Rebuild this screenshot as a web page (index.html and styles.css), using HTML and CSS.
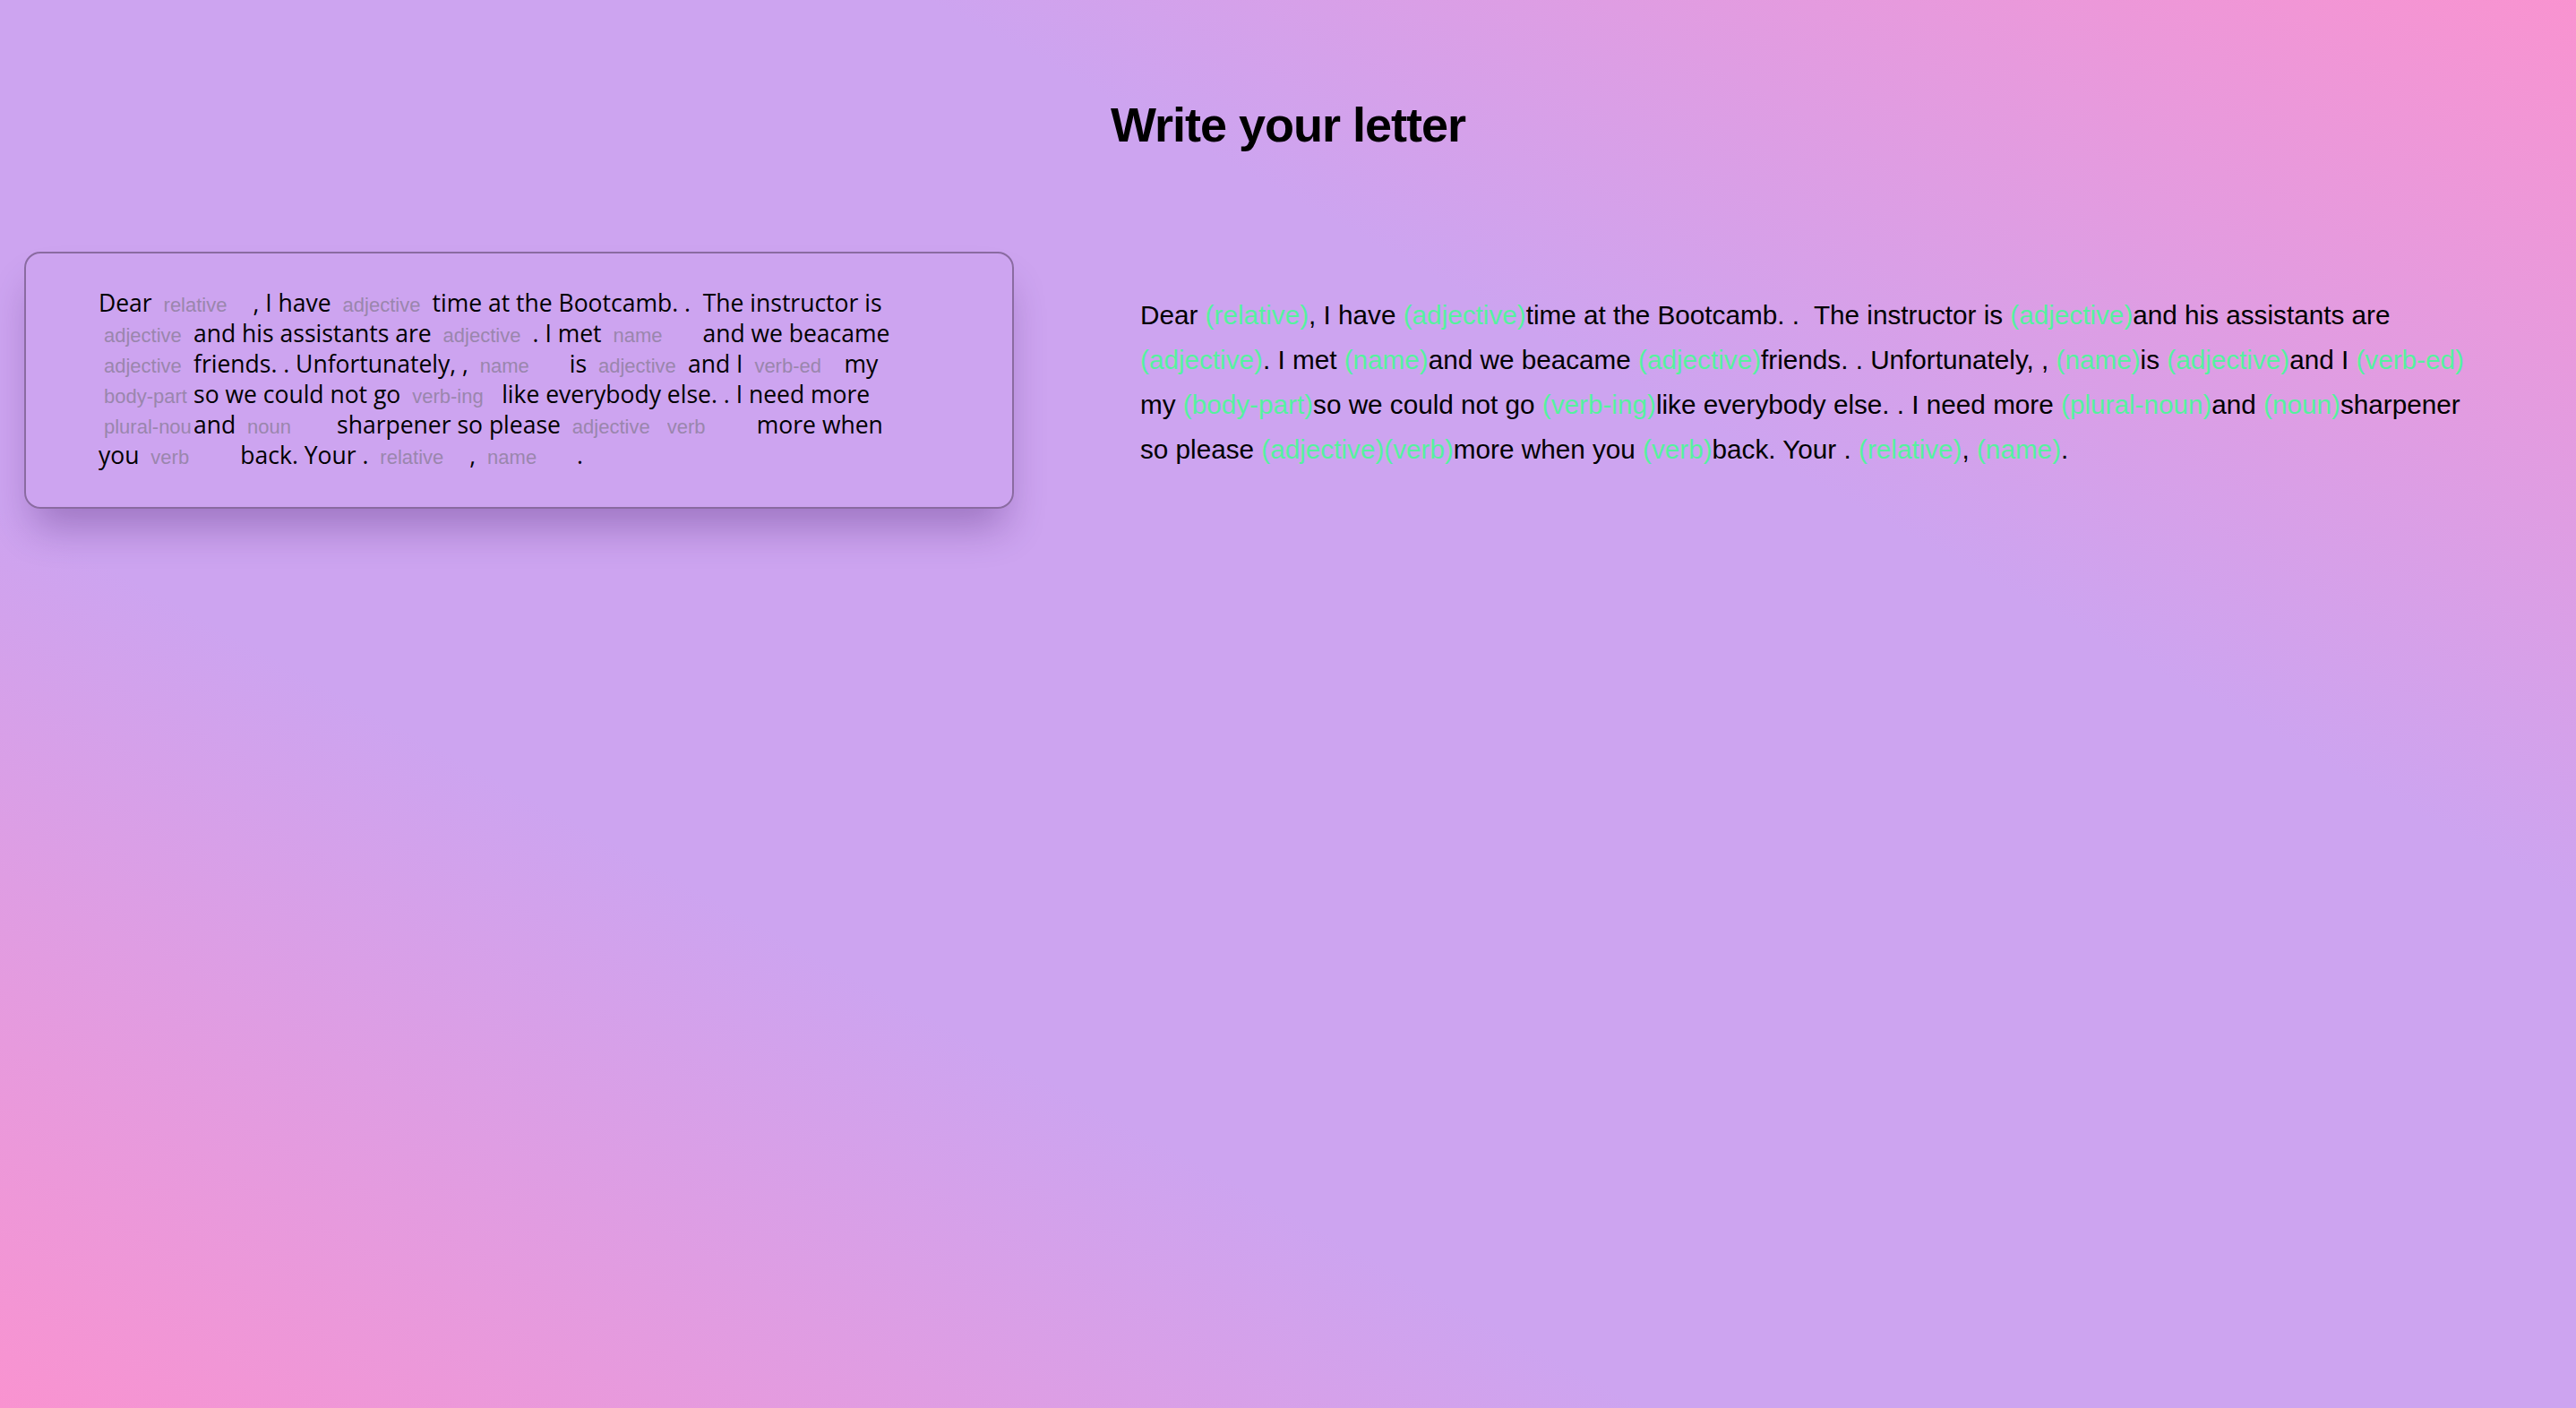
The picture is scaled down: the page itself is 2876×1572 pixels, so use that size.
FILE: index.html
```html
<!DOCTYPE html>
<html lang="en">
<head>
<meta charset="utf-8">
<title>Write your letter</title>
<link rel="stylesheet" href="styles.css">
</head>
<body>
<main class="page">
  <h1 class="title">Write your letter</h1>
  <div class="columns">
    <form class="card">
      <p class="fill">Dear <input class="blank" placeholder="relative">, I have <input class="blank" placeholder="adjective">time at the Bootcamb. .&nbsp; The instructor is <input class="blank" placeholder="adjective">and his assistants are <input class="blank" placeholder="adjective">. I met <input class="blank" placeholder="name">and we beacame <input class="blank" placeholder="adjective">friends. . Unfortunately, , <input class="blank" placeholder="name">is <input class="blank" placeholder="adjective">and I <input class="blank" placeholder="verb-ed">my <input class="blank" placeholder="body-part">so we could not go <input class="blank" placeholder="verb-ing">like everybody else. . I need more <input class="blank" placeholder="plural-noun">and <input class="blank" placeholder="noun">sharpener so please <input class="blank" placeholder="adjective"><input class="blank" placeholder="verb">more when you <input class="blank" placeholder="verb">back. Your . <input class="blank" placeholder="relative">, <input class="blank" placeholder="name">.</p>
    </form>
    <p class="letter">Dear <span class="word">(relative)</span>, I have <span class="word">(adjective)</span>time at the Bootcamb. .&nbsp; The instructor is <span class="word">(adjective)</span>and his assistants are <span class="word">(adjective)</span>. I met <span class="word">(name)</span>and we beacame <span class="word">(adjective)</span>friends. . Unfortunately, , <span class="word">(name)</span>is <span class="word">(adjective)</span>and I <span class="word">(verb-ed)</span> my <span class="word">(body-part)</span>so we could not go <span class="word">(verb-ing)</span>like everybody else. . I need more <span class="word">(plural-noun)</span>and <span class="word">(noun)</span>sharpener so please <span class="word">(adjective)</span><span class="word">(verb)</span>more when you <span class="word">(verb)</span>back. Your . <span class="word">(relative)</span>, <span class="word">(name)</span>.</p>
  </div>
</main>
</body>
</html>
```

FILE: styles.css
```css
html, body {
  margin: 0;
  padding: 0;
}

body {
  min-height: 100vh;
  background: linear-gradient(to top right, #f993d0 0%, #cda4f0 32%, #cda4f0 68%, #f993d0 100%);
  color: #000;
  font-family: "Liberation Sans", Arial, sans-serif;
}

.page {
  padding: 104px 0 0 27px;
}

.title {
  margin: 0;
  font-family: "Liberation Sans", Arial, sans-serif;
  font-weight: 700;
  font-size: 54px;
  letter-spacing: -1px;
  line-height: 71px;
  text-align: center;
  padding-right: 27px;
}

.columns {
  display: grid;
  grid-template-columns: 1105px 1497px;
  column-gap: 141px;
  align-items: start;
  margin-top: 106px;
}

.card {
  margin: 0;
  border: 2px solid #8a6ba1;
  border-radius: 18px;
  padding: 38px 0 41px 81px;
  box-shadow: 0 30px 45px -10px rgba(60, 20, 100, 0.33);
}

.fill {
  margin: 0;
  width: 905px;
  font-family: "Open Sans", sans-serif;
  font-size: 26.5px;
  line-height: 34px;
  color: #000;
}

.blank {
  width: 98px;
  padding: 0 2px 0 6px;
  margin: 0;
  border: none;
  outline: none;
  background: transparent;
  font-family: "Liberation Sans", Arial, sans-serif;
  font-size: 22px;
  color: #000;
  vertical-align: baseline;
}

.blank::placeholder {
  color: #9a86ad;
  opacity: 1;
}

.letter {
  margin: 46px 0 0;
  font-family: "Liberation Sans", Arial, sans-serif;
  font-size: 29.7px;
  line-height: 50px;
  color: #000;
}

.word {
  color: #55f29e;
}
```
